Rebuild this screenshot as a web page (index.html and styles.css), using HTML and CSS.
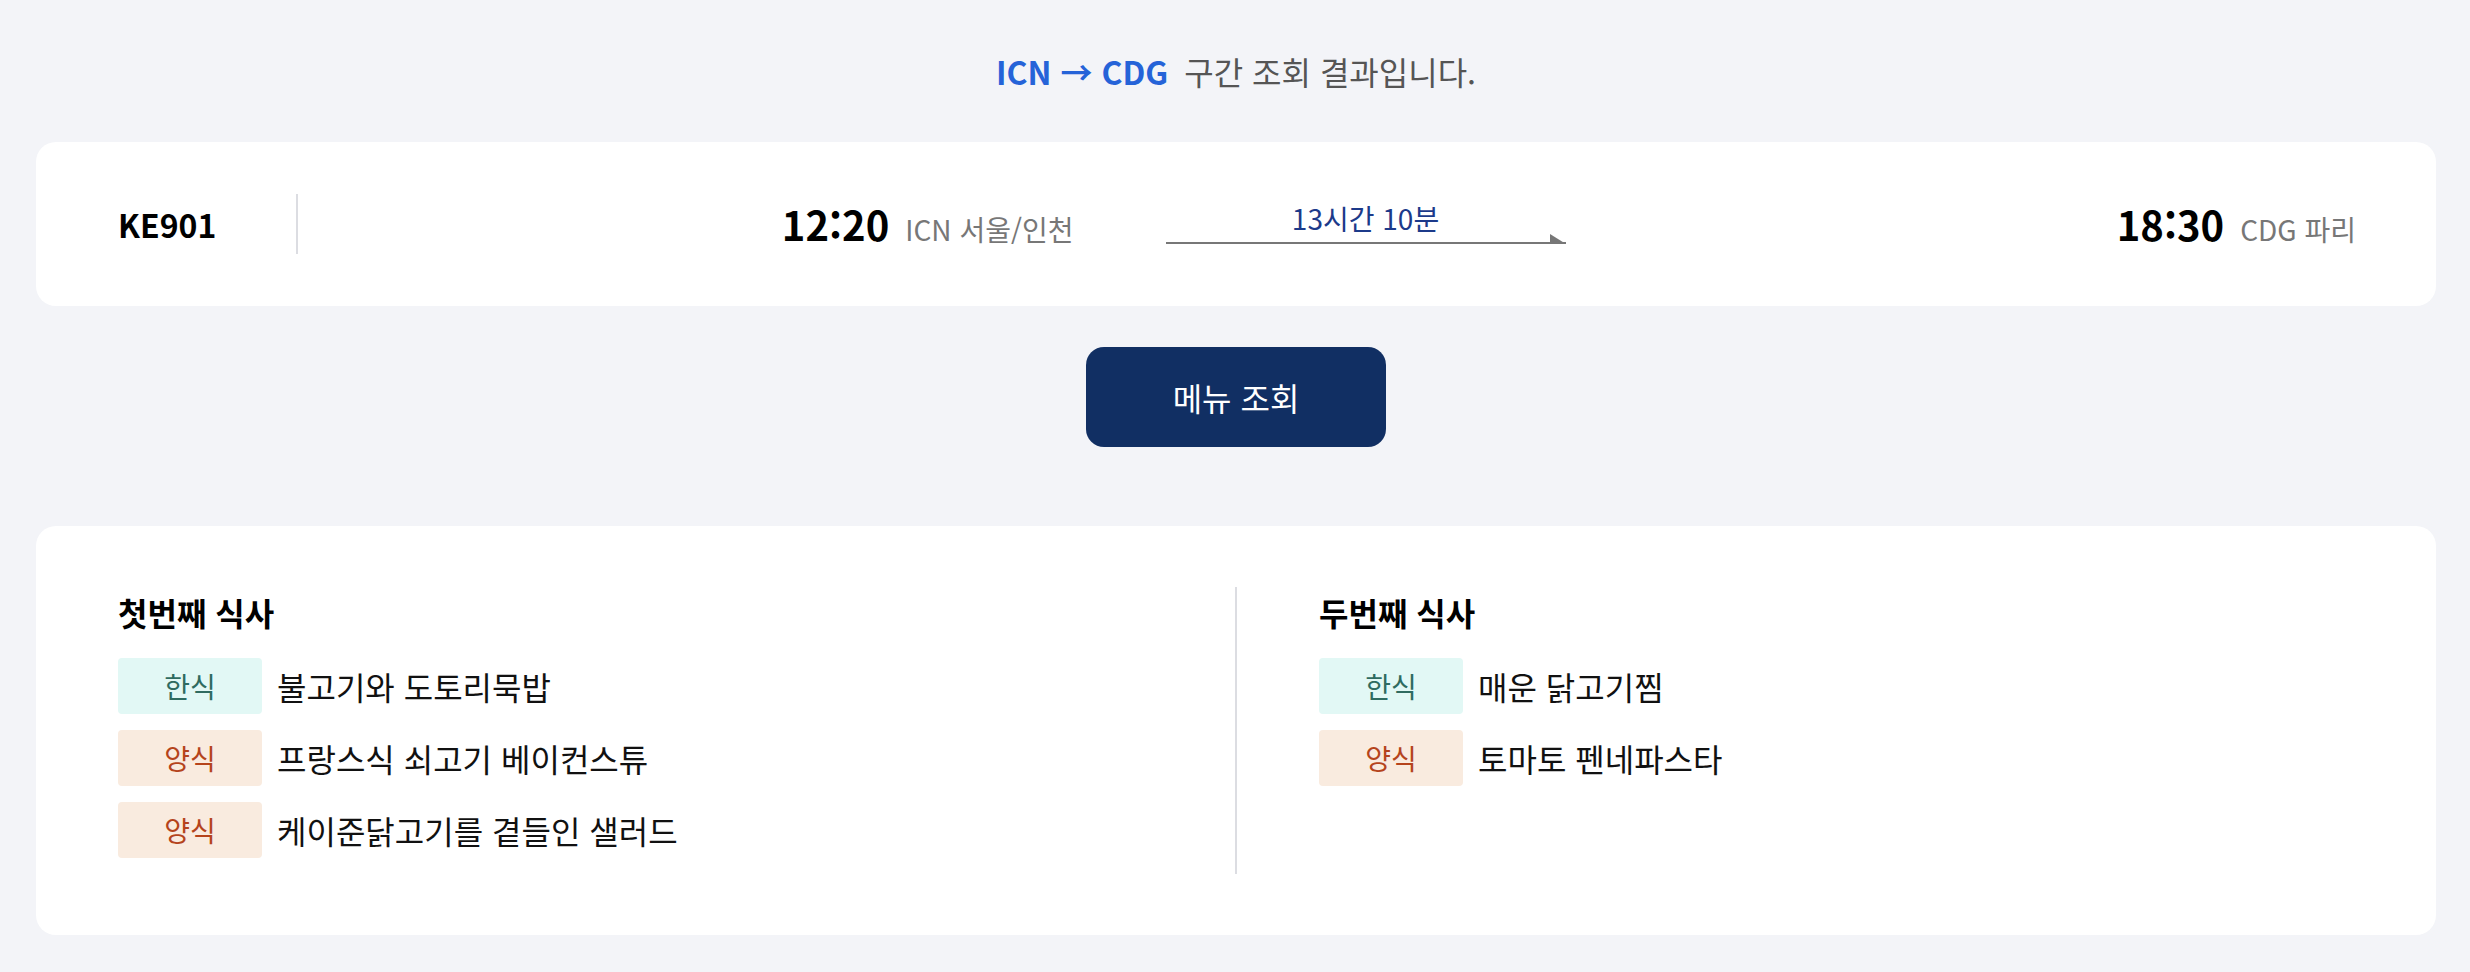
FILE: index.html
```html
<!DOCTYPE html>
<html lang="ko">
<head>
<meta charset="utf-8">
<title>기내식 메뉴 조회</title>
<link rel="stylesheet" href="styles.css">
</head>
<body>
<div class="page">
  <div class="title">
    <span class="route-name">ICN → CDG</span>
    <span class="title-text">구간 조회 결과입니다.</span>
  </div>

  <section class="card flight-card">
    <div class="flight-no">KE901</div>
    <div class="vdivider"></div>
    <div class="route">
      <div class="point">
        <span class="time">12:20</span>
        <span class="city">ICN 서울/인천</span>
      </div>
      <div class="duration">
        <div class="duration-text">13시간 10분</div>
        <svg class="arrow" width="400" height="12" viewBox="0 0 400 12">
          <rect x="0" y="9" width="400" height="2" fill="#777777"/>
          <polygon points="384,1 400,11 384,11" fill="#777777"/>
        </svg>
      </div>
      <div class="point">
        <span class="time">18:30</span>
        <span class="city">CDG 파리</span>
      </div>
    </div>
  </section>

  <div class="btn-row">
    <button class="btn-primary" type="button">메뉴 조회</button>
  </div>

  <section class="card meal-card">
    <div class="meal-col">
      <h2 class="meal-title">첫번째 식사</h2>
      <div class="meal-row"><span class="badge badge-kr">한식</span><span class="dish">불고기와 도토리묵밥</span></div>
      <div class="meal-row"><span class="badge badge-west">양식</span><span class="dish">프랑스식 쇠고기 베이컨스튜</span></div>
      <div class="meal-row"><span class="badge badge-west">양식</span><span class="dish">케이준닭고기를 곁들인 샐러드</span></div>
    </div>
    <div class="meal-col meal-col-second">
      <h2 class="meal-title">두번째 식사</h2>
      <div class="meal-row"><span class="badge badge-kr">한식</span><span class="dish">매운 닭고기찜</span></div>
      <div class="meal-row"><span class="badge badge-west">양식</span><span class="dish">토마토 펜네파스타</span></div>
    </div>
  </section>
</div>
</body>
</html>
```

FILE: styles.css
```css
* { box-sizing: border-box; }

html, body {
  margin: 0;
  padding: 0;
  background: #f3f4f8;
  font-family: "Noto Sans CJK KR", "Noto Sans", sans-serif;
  color: #111111;
}

.page {
  padding: 0 34px 40px 36px;
}

.title {
  height: 142px;
  display: flex;
  align-items: center;
  justify-content: center;
  gap: 16px;
  font-size: 32px;
  line-height: 42px;
}

.route-name {
  color: #2563d8;
  font-weight: 700;
}

.title-text {
  color: #555555;
}

.card {
  background: #ffffff;
  border-radius: 20px;
}

.flight-card {
  height: 164px;
  display: flex;
  align-items: center;
  padding: 0 80px 0 82px;
}

.flight-no {
  font-size: 32px;
  font-weight: 700;
  color: #000000;
  width: 96px;
}

.vdivider {
  width: 2px;
  height: 60px;
  background: #dcdde2;
  margin: 0 77px 0 82px;
}

.route {
  flex: 1;
  display: flex;
  align-items: center;
}

.point {
  flex: 1;
  display: flex;
  justify-content: flex-end;
  align-items: baseline;
  gap: 16px;
}

.time {
  font-size: 40px;
  font-weight: 700;
  color: #000000;
  line-height: 50px;
}

.city {
  font-size: 28px;
  color: #777777;
}

.duration {
  width: 400px;
  margin: 0 92px 0 92px;
  display: flex;
  flex-direction: column;
  align-items: center;
}

.duration-text {
  font-size: 28px;
  line-height: 30px;
  color: #1c3a8a;
}

.arrow {
  display: block;
}

.btn-row {
  display: flex;
  justify-content: center;
  padding: 41px 0 79px;
}

.btn-primary {
  width: 300px;
  height: 100px;
  border: none;
  border-radius: 18px;
  background: #112f63;
  color: #ffffff;
  font-family: inherit;
  font-size: 32px;
}

.meal-card {
  display: flex;
  padding: 61px 0 61px;
}

.meal-col {
  flex: 1;
  padding-left: 82px;
}

.meal-col-second {
  border-left: 2px solid #dcdde2;
}

.meal-title {
  margin: 0 0 21px;
  font-size: 32px;
  line-height: 50px;
  font-weight: 700;
  color: #000000;
}

.meal-row {
  display: flex;
  align-items: center;
  gap: 15px;
  margin-bottom: 16px;
}

.badge {
  width: 144px;
  height: 56px;
  border-radius: 4px;
  display: flex;
  align-items: center;
  justify-content: center;
  font-size: 28px;
}

.badge-kr {
  background: #e2f8f5;
  color: #2f6b60;
}

.badge-west {
  background: #f9ebdf;
  color: #b5441c;
}

.dish {
  font-size: 32px;
  color: #111111;
}
```
